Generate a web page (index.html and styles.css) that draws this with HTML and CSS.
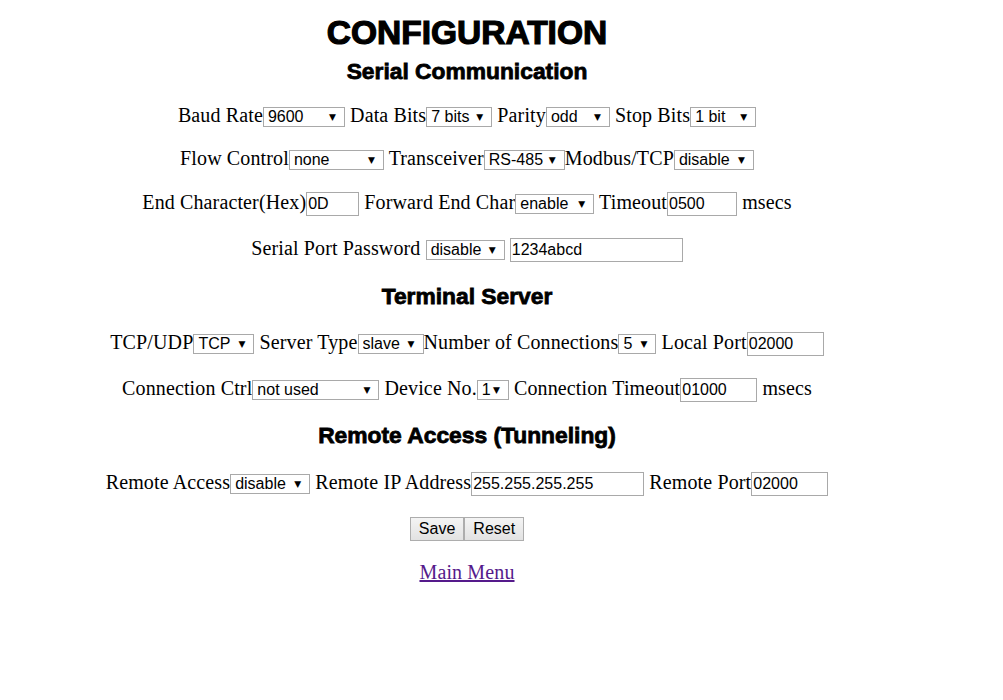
FILE: index.html
```html
<!DOCTYPE html>
<html>
<head>
<meta charset="utf-8">
<title>Configuration</title>
<link rel="stylesheet" href="styles.css">
</head>
<body>
<div class="page">
  <h1 class="title">CONFIGURATION</h1>
  <h2 class="section first">Serial Communication</h2>

  <div class="row r1">Baud Rate<span class="sel w82"><select><option>9600</option></select></span> Data Bits<span class="sel w66"><select><option>7 bits</option></select></span> Parity<span class="sel w64"><select><option>odd</option></select></span> Stop Bits<span class="sel w66"><select><option>1 bit</option></select></span></div>

  <div class="row r2">Flow Control<span class="sel w95"><select><option>none</option></select></span> Transceiver<span class="sel w81"><select><option>RS-485</option></select></span>Modbus/TCP<span class="sel w80"><select><option>disable</option></select></span></div>

  <div class="row r3">End Character(Hex)<input class="txt w53" value="0D"> Forward End Char<span class="sel w79"><select><option>enable</option></select></span> Timeout<input class="txt w70" value="0500"> msecs</div>

  <div class="row r4">Serial Port Password <span class="sel w79"><select><option>disable</option></select></span> <input class="txt w173" value="1234abcd"></div>

  <h2 class="section">Terminal Server</h2>

  <div class="row r5">TCP/UDP<span class="sel w61"><select><option>TCP</option></select></span> Server Type<span class="sel w66"><select><option>slave</option></select></span>Number of Connections<span class="sel w38"><select><option>5</option></select></span> Local Port<input class="txt w77" value="02000"></div>

  <div class="row r6">Connection Ctrl<span class="sel w127"><select><option>not used</option></select></span> Device No.<span class="sel w32"><select><option>1</option></select></span> Connection Timeout<input class="txt w77" value="01000"> msecs</div>

  <h2 class="section">Remote Access (Tunneling)</h2>

  <div class="row r7">Remote Access<span class="sel w80"><select><option>disable</option></select></span> Remote IP Address<input class="txt w173" value="255.255.255.255"> Remote Port<input class="txt w77" value="02000"></div>

  <div class="row r8"><button class="btn">Save</button><button class="btn">Reset</button></div>

  <div class="row r9"><a class="menu" href="#">Main Menu</a></div>
</div>
</body>
</html>
```

FILE: styles.css
```css
html, body {
  margin: 0;
  padding: 0;
  background: #ffffff;
}

.page {
  width: 934px;
  font-family: "Liberation Serif", "Times New Roman", serif;
  font-size: 20px;
  color: #000;
  padding-top: 13px;
}

.title {
  margin: 0;
  height: 40px;
  line-height: 40px;
  font-family: "Liberation Sans", Arial, sans-serif;
  font-size: 33.5px;
  font-weight: bold;
  text-align: center;
  -webkit-text-stroke: 1.2px #000;
}

.section {
  margin: 10px 0 0 0;
  height: 28px;
  line-height: 28px;
  font-family: "Liberation Sans", Arial, sans-serif;
  font-size: 22.8px;
  font-weight: bold;
  text-align: center;
  -webkit-text-stroke: 0.8px #000;
}

.section.first {
  margin-top: 4px;
}

.row {
  text-align: center;
  white-space: nowrap;
  height: 43px;
  line-height: 43px;
  letter-spacing: 0.13px;
}

.r1 { margin-top: 9px; }
.r3 { height: 44px; line-height: 44px; }
.r4 { height: 48px; line-height: 48px; }
.r5 { margin-top: 9px; height: 46px; line-height: 46px; }
.r6 { height: 46px; line-height: 46px; }
.r7 { margin-top: 10px; height: 46px; line-height: 46px; }
.r8 { height: 44px; line-height: 44px; }
.r9 { height: 44px; line-height: 44px; margin-top: 1px; }

.sel {
  position: relative;
  display: inline-block;
  vertical-align: middle;
  height: 20px;
  line-height: 20px;
  letter-spacing: normal;
}

.sel select {
  -webkit-appearance: none;
  appearance: none;
  display: block;
  box-sizing: border-box;
  width: 100%;
  height: 20px;
  margin: 0;
  padding: 0 0 0 4px;
  border: 1px solid #a9a9a9;
  border-radius: 0;
  background: #ffffff;
  color: #000;
  font-family: "Liberation Sans", Arial, sans-serif;
  font-size: 16px;
  line-height: 18px;
  letter-spacing: normal;
}

.sel::after {
  content: "\25BC";
  position: absolute;
  right: 9px;
  top: 0;
  font-family: "DejaVu Sans", sans-serif;
  font-size: 9px;
  line-height: 20px;
  color: #000;
  pointer-events: none;
}

.w32 { width: 32px; }
.w38 { width: 38px; }
.w53 { width: 53px; }
.w61 { width: 61px; }
.w64 { width: 64px; }
.w66 { width: 66px; }
.w70 { width: 70px; }
.w77 { width: 77px; }
.w79 { width: 79px; }
.w80 { width: 80px; }
.w81 { width: 81px; }
.w82 { width: 82px; }
.w95 { width: 95px; }
.w127 { width: 127px; }
.w173 { width: 173px; }

.txt {
  box-sizing: border-box;
  vertical-align: middle;
  height: 24px;
  margin: 0;
  padding: 0 1px;
  border: 1px solid #a9a9a9;
  border-radius: 0;
  background: #fff;
  color: #000;
  font-family: "Liberation Sans", Arial, sans-serif;
  font-size: 16px;
  letter-spacing: normal;
  outline: none;
}

.btn {
  box-sizing: border-box;
  vertical-align: middle;
  height: 24px;
  margin: 0;
  padding: 0 8px;
  border: 1px solid #adadad;
  border-radius: 0;
  background: linear-gradient(#f4f4f4, #e2e2e2);
  color: #000;
  font-family: "Liberation Sans", Arial, sans-serif;
  font-size: 16px;
  letter-spacing: normal;
}

.menu {
  color: #551a8b;
  text-decoration: underline;
}
```
